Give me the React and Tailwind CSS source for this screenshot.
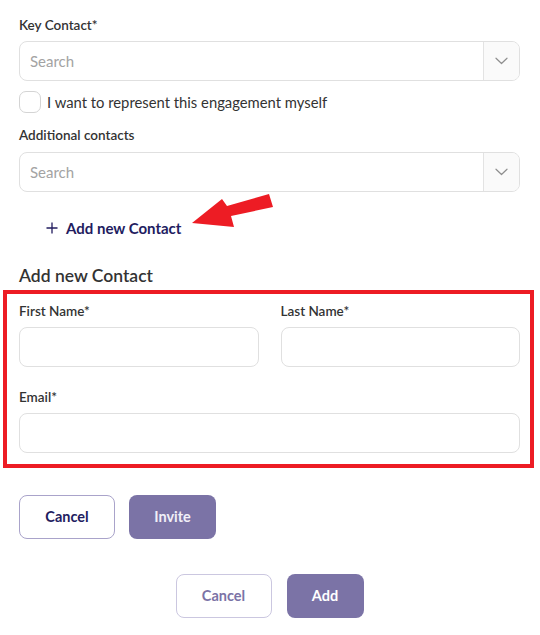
import React from "react";

const Chevron = () => (
  <svg width="13" height="8" viewBox="0 0 13 8" fill="none">
    <path d="M1 1.2l5.5 5.3 5.5-5.3" stroke="#8f8f8f" strokeWidth="1.2" strokeLinecap="round" strokeLinejoin="round" />
  </svg>
);

function SearchSelect() {
  return (
    <div className="flex h-[40px] w-full overflow-hidden rounded-[8px] border border-[#e0e0e0] bg-white">
      <div className="flex flex-1 items-center pl-[10px] text-[15px] text-[#a3a3a3]">Search</div>
      <div className="flex w-[36px] items-center justify-center border-l border-[#e3e3e3] bg-[#fafafa]">
        <Chevron />
      </div>
    </div>
  );
}

const Input = () => <div className="h-[40px] w-full rounded-[8px] border border-[#e0e0e0] bg-white" />;

const Label = ({ children }) => (
  <div className="text-[13.5px] font-semibold leading-[18px] text-[#333]">{children}</div>
);

export default function App() {
  return (
    <div className="relative min-h-screen bg-white pl-[19px] pr-[20px] pt-[16px] font-['Lato',sans-serif]">
      <Label>Key Contact*</Label>
      <div className="mt-[7px]">
        <SearchSelect />
      </div>

      <div className="mt-[10px] flex h-[22px] items-center gap-[6px]">
        <div className="h-[22px] w-[22px] rounded-[7px] border border-[#d4d4d4]" />
        <span className="text-[14.8px] text-[#333]">I want to represent this engagement myself</span>
      </div>

      <div className="mt-[13px]">
        <Label>Additional contacts</Label>
      </div>
      <div className="mt-[8px]">
        <SearchSelect />
      </div>

      <div className="mt-[26px] flex h-[20px] items-center gap-[8px] pl-[27px] text-[15px] font-bold text-[#221c5f]">
        <svg width="12" height="12" viewBox="0 0 12 12">
          <path d="M6 0.5v11M0.5 6h11" stroke="#221c5f" strokeWidth="1.3" />
        </svg>
        <span>Add new Contact</span>
      </div>

      <div className="mt-[26px] h-[24px] text-[17.5px] font-semibold leading-[24px] text-[#333]">Add new Contact</div>

      <div className="-ml-[16px] -mr-[14px] mt-[2px] border-4 border-[#ed1c24] pb-[11px] pl-[12px] pr-[10px] pt-[8px]">
        <div className="grid grid-cols-2 gap-x-[22px]">
          <div>
            <Label>First Name*</Label>
            <div className="mt-[7px]">
              <Input />
            </div>
          </div>
          <div>
            <Label>Last Name*</Label>
            <div className="mt-[7px]">
              <Input />
            </div>
          </div>
        </div>
        <div className="mt-[21px]">
          <Label>Email*</Label>
          <div className="mt-[7px]">
            <Input />
          </div>
        </div>
      </div>

      <div className="mt-[27px] flex gap-[14px]">
        <button className="h-[44px] w-[96px] rounded-[8px] border border-[#a9a3ca] bg-white text-[14.5px] font-bold text-[#221c5f]">
          Cancel
        </button>
        <button className="h-[44px] w-[87px] rounded-[8px] bg-[#7b73a6] text-[14.5px] font-bold text-[#f1eff8]">
          Invite
        </button>
      </div>

      <div className="mt-[35px] flex justify-center gap-[15px] pb-[18px]">
        <button className="h-[44px] w-[96px] rounded-[8px] border border-[#cbc7e0] bg-white text-[14.5px] font-bold text-[#7b73a6]">
          Cancel
        </button>
        <button className="h-[44px] w-[77px] rounded-[8px] bg-[#7b73a6] text-[14.5px] font-bold text-white">
          Add
        </button>
      </div>

      <svg className="pointer-events-none absolute left-0 top-0" width="540" height="260">
        <polygon
          points="192,223 222,199 227,206 269,194 273,207 231,216 234,227"
          fill="#ed1c24"
        />
      </svg>
    </div>
  );
}
